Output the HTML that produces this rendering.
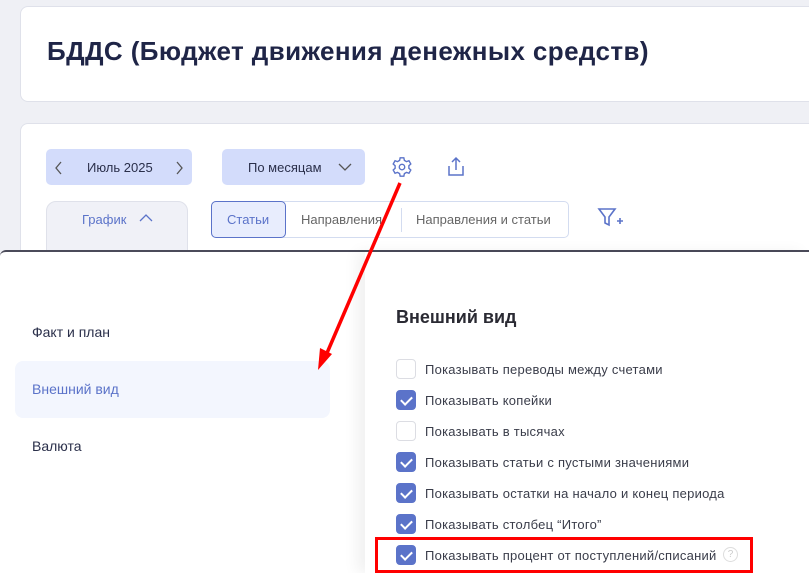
<!DOCTYPE html>
<html><head><meta charset="utf-8"><style>
*{box-sizing:border-box;margin:0;padding:0}
body{width:809px;height:573px;overflow:hidden;background:#eff0f5;font-family:"Liberation Sans",sans-serif;position:relative}
.card{position:absolute;background:#fff;border:1px solid #dfe1ea;border-radius:8px}
.t{position:absolute;white-space:nowrap}
.btn{position:absolute;background:#d3dcfb;border-radius:5px;color:#2a2f4a;font-size:13px}
.cb{position:absolute;left:396px;width:20px;height:20px;border-radius:4px;border:1px solid #dcdde3;background:#fff}
.cb.on{background:#5b73c9;border-color:#5b73c9}
.cb.on:after{content:"";position:absolute;left:6px;top:3px;width:5px;height:9px;border:solid #fff;border-width:0 2px 2px 0;transform:rotate(45deg)}
.lbl{position:absolute;left:425px;font-size:13px;color:#3a3d4a;white-space:nowrap;letter-spacing:0.25px}
</style></head><body>
<div class="card" style="left:20px;top:6px;width:800px;height:96px"></div>
<div class="t" style="left:47px;top:36px;font-size:26px;font-weight:bold;color:#1f2547;letter-spacing:0.4px">БДДС (Бюджет движения денежных средств)</div>
<div class="card" style="left:20px;top:123px;width:800px;height:200px"></div>
<div class="btn" style="left:46px;top:149px;width:146px;height:36px"></div>
<svg style="position:absolute;left:54px;top:161px" width="10" height="14"><path d="M7 1L2 7l5 6" fill="none" stroke="#555" stroke-width="1.3"/></svg>
<div class="t" style="left:87px;top:160px;font-size:13px;color:#2a2f4a">Июль 2025</div>
<svg style="position:absolute;left:174px;top:161px" width="10" height="14"><path d="M3 1l5 6-5 6" fill="none" stroke="#555" stroke-width="1.3"/></svg>
<div class="btn" style="left:222px;top:149px;width:143px;height:36px"></div>
<div class="t" style="left:248px;top:160px;font-size:13px;color:#2a2f4a">По месяцам</div>
<svg style="position:absolute;left:337px;top:161px" width="16" height="12"><path d="M2 3l6 6 6-6" fill="none" stroke="#555" stroke-width="1.3"/></svg>
<svg style="position:absolute;left:391px;top:156px" width="22" height="22" viewBox="0 0 24 24" fill="none" stroke="#5b73c9" stroke-width="1.5"><circle cx="12" cy="12" r="3"/><path d="M10 2h4l.6 2.8 2.3 1.3 2.7-.9 2 3.5-2.1 1.9v2.8l2.1 1.9-2 3.5-2.7-.9-2.3 1.3L14 22h-4l-.6-2.8-2.3-1.3-2.7.9-2-3.5 2.1-1.9v-2.8L2.4 8.7l2-3.5 2.7.9 2.3-1.3z"/></svg>
<svg style="position:absolute;left:445px;top:155px" width="22" height="24" viewBox="0 0 22 24" fill="none" stroke="#5b73c9" stroke-width="1.5"><path d="M11 15V3M7 7l4-4 4 4M4 11v9h14v-9"/></svg>
<div style="position:absolute;left:46px;top:201px;width:142px;height:60px;background:#f0f1f7;border:1px solid #dfe1ea;border-radius:10px"></div>
<div class="t" style="left:82px;top:212px;font-size:13px;color:#5b73c9">График</div>
<svg style="position:absolute;left:138px;top:212px" width="16" height="12"><path d="M2 9l6-6 6 6" fill="none" stroke="#5b73c9" stroke-width="1.3"/></svg>
<div style="position:absolute;left:211px;top:201px;width:358px;height:37px;border:1px solid #d3dcf0;border-radius:5px"></div>
<div style="position:absolute;left:211px;top:201px;width:75px;height:37px;border:1px solid #5b73c9;border-radius:5px;background:#e8edfd"></div>
<div class="t" style="left:227px;top:212px;font-size:13px;color:#5b73c9">Статьи</div>
<div class="t" style="left:301px;top:212px;font-size:13px;color:#666">Направления</div>
<div style="position:absolute;left:401px;top:208px;width:1px;height:24px;background:#d3dcf0"></div>
<div class="t" style="left:416px;top:212px;font-size:13px;color:#666">Направления и статьи</div>
<svg style="position:absolute;left:597px;top:207px" width="28" height="22" viewBox="0 0 28 22" fill="none" stroke="#5b73c9" stroke-width="1.6"><path d="M2 2h16l-6 8v8l-4-2v-6z"/><path d="M20 14h6M23 11v6"/></svg>
<div style="position:absolute;left:0;top:250px;width:809px;height:323px;background:#fff;border-top:2px solid #4b4b5a;border-radius:6px 0 0 0"></div>
<div style="position:absolute;left:365px;top:252px;width:444px;height:321px;background:#fff;box-shadow:-8px 0 14px rgba(0,0,0,0.06)"></div>
<div class="t" style="left:32px;top:324px;font-size:14px;color:#2a2f4a">Факт и план</div>
<div style="position:absolute;left:15px;top:361px;width:315px;height:57px;background:#f3f6fe;border-radius:8px"></div>
<div class="t" style="left:32px;top:381px;font-size:14px;color:#5b73c9">Внешний вид</div>
<div class="t" style="left:32px;top:438px;font-size:14px;color:#2a2f4a">Валюта</div>
<div class="t" style="left:396px;top:307px;font-size:18px;font-weight:bold;color:#2a2a33">Внешний вид</div>
<div class="cb" style="top:359px"></div><div class="lbl" style="top:362px">Показывать переводы между счетами</div>
<div class="cb on" style="top:390px"></div><div class="lbl" style="top:393px">Показывать копейки</div>
<div class="cb" style="top:421px"></div><div class="lbl" style="top:424px">Показывать в тысячах</div>
<div class="cb on" style="top:452px"></div><div class="lbl" style="top:455px">Показывать статьи с пустыми значениями</div>
<div class="cb on" style="top:483px"></div><div class="lbl" style="top:486px">Показывать остатки на начало и конец периода</div>
<div class="cb on" style="top:514px"></div><div class="lbl" style="top:517px">Показывать столбец “Итого”</div>
<div class="cb on" style="top:545px"></div><div class="lbl" style="top:548px">Показывать процент от поступлений/списаний</div>
<div style="position:absolute;left:723px;top:547px;width:15px;height:15px;border:1px solid #ddd;border-radius:50%;color:#ccc;font-size:10px;text-align:center;line-height:13px">?</div>
<div style="position:absolute;left:375px;top:537px;width:378px;height:36px;border:3px solid #f00"></div>
<svg style="position:absolute;left:0;top:0" width="809" height="573"><path d="M400 183L324 360" stroke="#f00" stroke-width="3.5"/><path d="M318 370l2-22 12 6z" fill="#f00"/></svg>
</body></html>
